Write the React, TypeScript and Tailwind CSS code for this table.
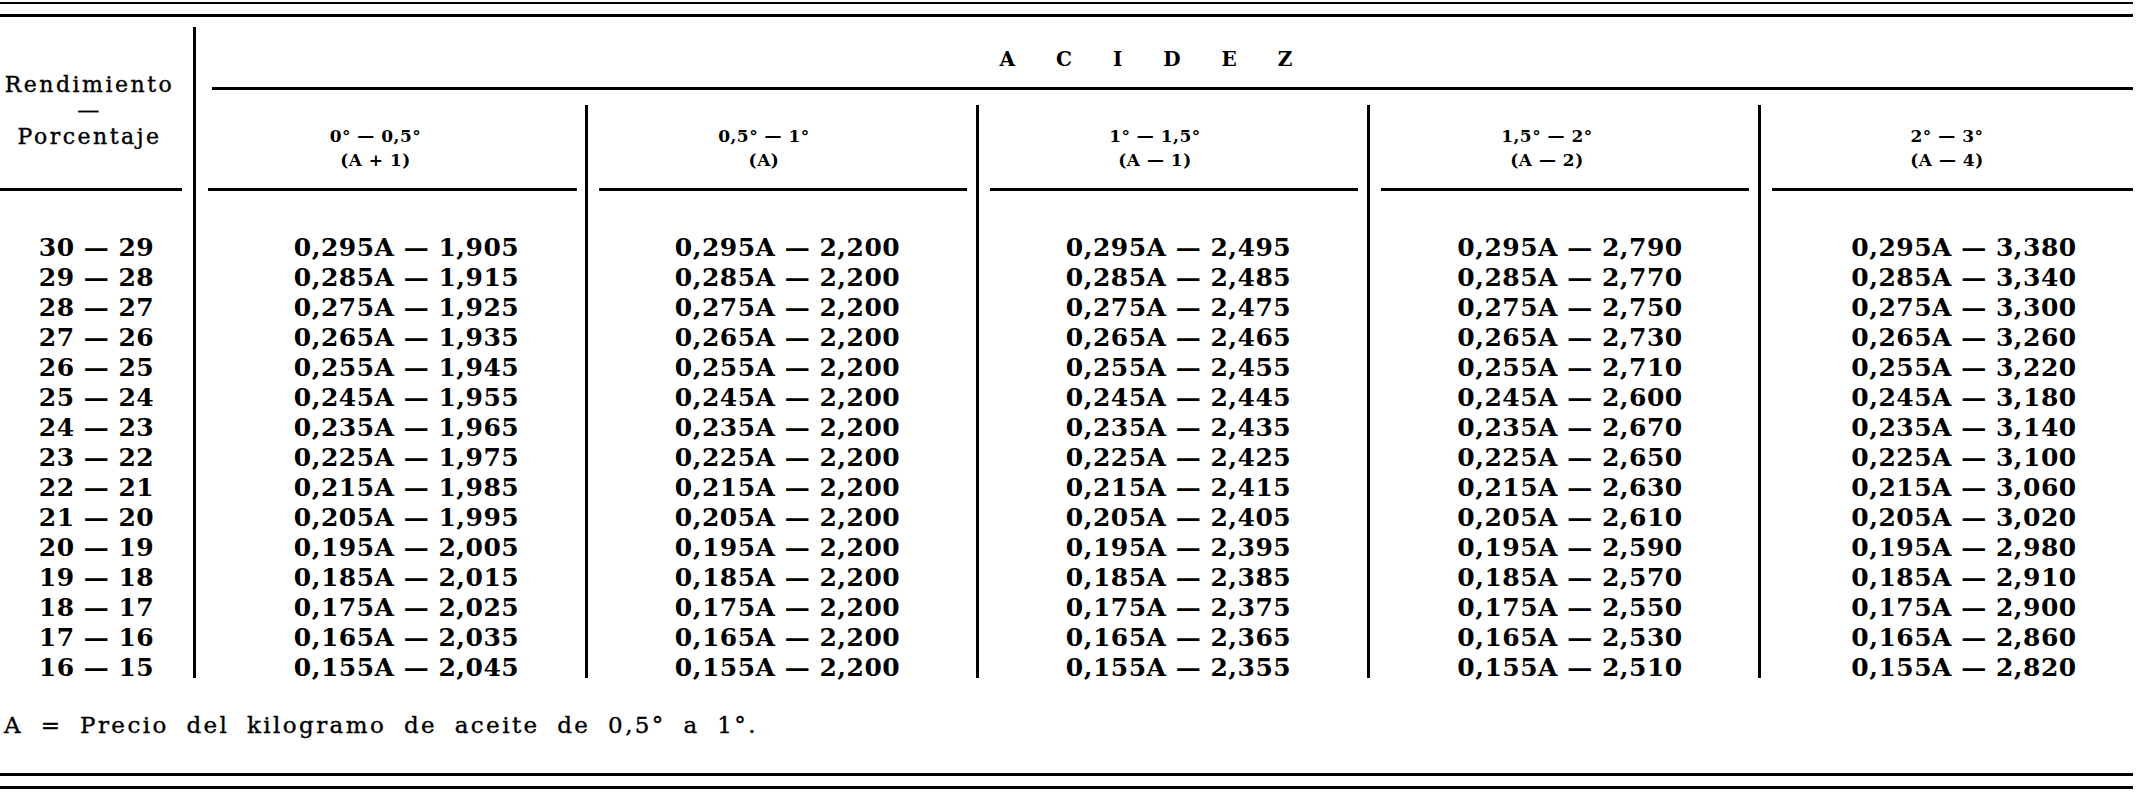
const rows: string[][] = [
  ["30 — 29", "0,295A — 1,905", "0,295A — 2,200", "0,295A — 2,495", "0,295A — 2,790", "0,295A — 3,380"],
  ["29 — 28", "0,285A — 1,915", "0,285A — 2,200", "0,285A — 2,485", "0,285A — 2,770", "0,285A — 3,340"],
  ["28 — 27", "0,275A — 1,925", "0,275A — 2,200", "0,275A — 2,475", "0,275A — 2,750", "0,275A — 3,300"],
  ["27 — 26", "0,265A — 1,935", "0,265A — 2,200", "0,265A — 2,465", "0,265A — 2,730", "0,265A — 3,260"],
  ["26 — 25", "0,255A — 1,945", "0,255A — 2,200", "0,255A — 2,455", "0,255A — 2,710", "0,255A — 3,220"],
  ["25 — 24", "0,245A — 1,955", "0,245A — 2,200", "0,245A — 2,445", "0,245A — 2,600", "0,245A — 3,180"],
  ["24 — 23", "0,235A — 1,965", "0,235A — 2,200", "0,235A — 2,435", "0,235A — 2,670", "0,235A — 3,140"],
  ["23 — 22", "0,225A — 1,975", "0,225A — 2,200", "0,225A — 2,425", "0,225A — 2,650", "0,225A — 3,100"],
  ["22 — 21", "0,215A — 1,985", "0,215A — 2,200", "0,215A — 2,415", "0,215A — 2,630", "0,215A — 3,060"],
  ["21 — 20", "0,205A — 1,995", "0,205A — 2,200", "0,205A — 2,405", "0,205A — 2,610", "0,205A — 3,020"],
  ["20 — 19", "0,195A — 2,005", "0,195A — 2,200", "0,195A — 2,395", "0,195A — 2,590", "0,195A — 2,980"],
  ["19 — 18", "0,185A — 2,015", "0,185A — 2,200", "0,185A — 2,385", "0,185A — 2,570", "0,185A — 2,910"],
  ["18 — 17", "0,175A — 2,025", "0,175A — 2,200", "0,175A — 2,375", "0,175A — 2,550", "0,175A — 2,900"],
  ["17 — 16", "0,165A — 2,035", "0,165A — 2,200", "0,165A — 2,365", "0,165A — 2,530", "0,165A — 2,860"],
  ["16 — 15", "0,155A — 2,045", "0,155A — 2,200", "0,155A — 2,355", "0,155A — 2,510", "0,155A — 2,820"],
];

// box: width + separator, head: header text offset, body: data offset, rule: underline gaps
const columns = [
  { range: "0° — 0,5°", formula: "(A + 1)", box: "w-[392px] border-r-[3px]", head: "pr-[30px]", body: "pl-[32px]", rule: "ml-[12px] mr-[8px]" },
  { range: "0,5° — 1°", formula: "(A)", box: "w-[391px] border-r-[3px]", head: "pr-[36px]", body: "pl-[11px]", rule: "ml-[11px] mr-[9px]" },
  { range: "1° — 1,5°", formula: "(A — 1)", box: "w-[391px] border-r-[3px]", head: "pr-[36px]", body: "pl-[11px]", rule: "ml-[11px] mr-[9px]" },
  { range: "1,5° — 2°", formula: "(A — 2)", box: "w-[391px] border-r-[3px]", head: "pr-[34px]", body: "pl-[12px]", rule: "ml-[11px] mr-[9px]" },
  { range: "2° — 3°", formula: "(A — 4)", box: "w-[372px]", head: "pr-0", body: "pl-[34px]", rule: "ml-[11px] mr-0" },
];

const cell = "h-[30px] leading-[30px] text-[25px] font-bold tracking-[0.5px] whitespace-nowrap";

export default function App() {
  return (
    <div className="w-[2141px] h-[805px] overflow-hidden bg-white text-black font-['DejaVu_Serif','Liberation_Serif',serif]">
      {/* top double rule */}
      <div className="w-[2133px] pt-[2px]">
        <div className="h-[2px] bg-black" />
        <div className="mt-[10px] h-[3px] bg-black" />
      </div>

      <div className="flex w-[2133px]">
        {/* Rendimiento column */}
        <div className="mt-[10px] flex w-[196px] flex-col border-r-[3px] border-black">
          <div className="h-[161px] pt-[45px] pr-[14px] text-center text-[22px] leading-[26px] tracking-[2.5px] [-webkit-text-stroke:0.4px_black]">
            <div>Rendimiento</div>
            <div>—</div>
            <div>Porcentaje</div>
          </div>
          <div className="mr-[11px] h-[3px] bg-black" />
          <div className="h-[487px] pt-[42px] text-center">
            {rows.map((r) => (
              <div key={r[0]} className={cell}>
                {r[0]}
              </div>
            ))}
          </div>
        </div>

        {/* Acidez block */}
        <div className="flex flex-1 flex-col">
          <div className="h-[70px] pt-[30px] pr-[20px] text-center text-[20px] font-bold leading-[24px] tracking-[17px]">
            A C I D E Z
          </div>
          <div className="ml-[16px] h-[3px] bg-black" />
          <div className="mt-[15px] flex">
            {columns.map((c, i) => (
              <div key={c.range} className={`flex flex-col border-black ${c.box}`}>
                <div className={`h-[83px] pt-[19px] text-center text-[17px] font-bold leading-[24px] tracking-[0.5px] ${c.head}`}>
                  <div>{c.range}</div>
                  <div>{c.formula}</div>
                </div>
                <div className={`h-[3px] bg-black ${c.rule}`} />
                <div className={`h-[487px] pt-[42px] text-center ${c.body}`}>
                  {rows.map((r) => (
                    <div key={r[0]} className={cell}>
                      {r[i + 1]}
                    </div>
                  ))}
                </div>
              </div>
            ))}
          </div>
        </div>
      </div>

      {/* footnote */}
      <div className="mt-[34px] pl-[4px] text-[23px] leading-[26px] tracking-[2.4px] [word-spacing:8px] [-webkit-text-stroke:0.4px_black]">
        A = Precio del kilogramo de aceite de 0,5° a 1°.
      </div>

      {/* bottom double rule */}
      <div className="mt-[35px] w-[2133px]">
        <div className="h-[3px] bg-black" />
        <div className="mt-[10px] h-[3px] bg-black" />
      </div>
    </div>
  );
}
